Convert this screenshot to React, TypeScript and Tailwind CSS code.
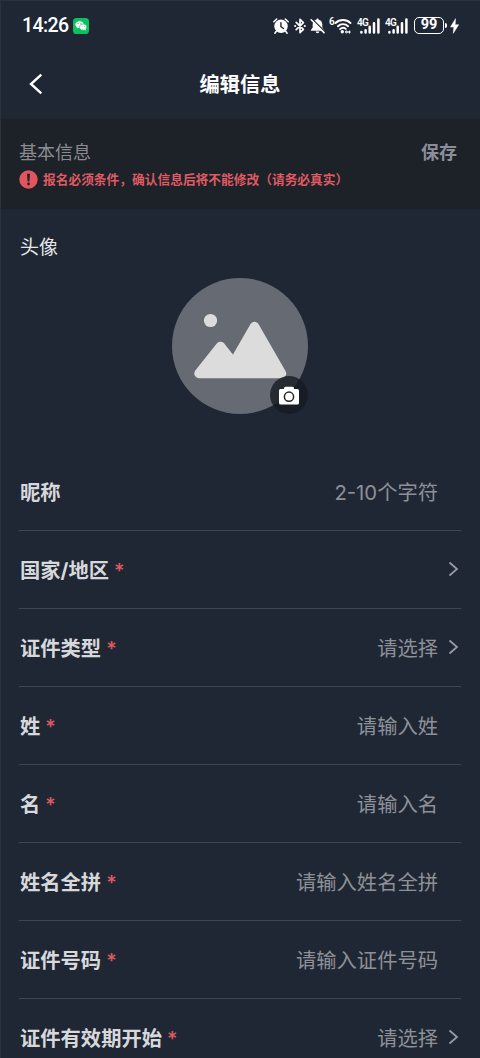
import React from 'react';

type Field = {
  label: string;
  required?: boolean;
  placeholder?: string;
  arrow?: boolean;
};

const fields: Field[] = [
  { label: '昵称', placeholder: '2-10个字符' },
  { label: '国家/地区', required: true, arrow: true },
  { label: '证件类型', required: true, placeholder: '请选择', arrow: true },
  { label: '姓', required: true, placeholder: '请输入姓' },
  { label: '名', required: true, placeholder: '请输入名' },
  { label: '姓名全拼', required: true, placeholder: '请输入姓名全拼' },
  { label: '证件号码', required: true, placeholder: '请输入证件号码' },
  { label: '证件有效期开始', required: true, placeholder: '请选择', arrow: true },
];

const WechatIcon: React.FC = () => (
  <svg width="16" height="16" viewBox="0 0 16 16" className="ml-[5px] shrink-0">
    <rect width="16" height="16" rx="3.6" fill="#0cc160" />
    <path d="M6.6 3.2C4.2 3.2 2.4 4.7 2.4 6.6c0 1.1.6 2 1.5 2.6l-.4 1.2 1.5-.7c.5.2 1 .2 1.6.2 2.4 0 4.2-1.4 4.2-3.3S9 3.2 6.6 3.2z" fill="#fff" />
    <ellipse cx="10.1" cy="9.1" rx="3.7" ry="3.1" fill="#fff" stroke="#0cc160" strokeWidth=".6" />
    <path d="M11.3 11.5l1.5 1.2-.2-1.9z" fill="#fff" />
    <g fill="#0cc160">
      <circle cx="5.2" cy="5.6" r=".55" />
      <circle cx="8" cy="5.6" r=".55" />
      <circle cx="9" cy="8.5" r=".45" />
      <circle cx="11.3" cy="8.5" r=".45" />
    </g>
  </svg>
);

const AlarmIcon: React.FC = () => (
  <svg width="16" height="16" viewBox="0 0 16 16" className="shrink-0">
    <circle cx="8" cy="8.3" r="6.7" fill="#fff" />
    <path d="M.8 3.8 3.7 1M15.2 3.8 12.3 1M3.3 13.2l-1.4 2M12.7 13.2l1.4 2" stroke="#fff" strokeWidth="1.5" strokeLinecap="round" />
    <path d="M7.9 4.7v4l2.6 1.8" fill="none" stroke="#202734" strokeWidth="1.4" strokeLinecap="round" />
  </svg>
);

const BluetoothIcon: React.FC = () => (
  <svg width="12" height="16" viewBox="0 0 12 16" className="ml-[5px] shrink-0">
    <path d="M2.2 4.3l7.2 7L6 14.6V1.4l3.4 3.3-7.2 7" fill="none" stroke="#fff" strokeWidth="1.7" strokeLinejoin="round" strokeLinecap="round" />
    <circle cx="1.2" cy="8" r="1.1" fill="#fff" />
    <circle cx="10.8" cy="8" r="1.1" fill="#fff" />
  </svg>
);

const MutedBellIcon: React.FC = () => (
  <svg width="15" height="16" viewBox="0 0 15 16" className="ml-1 shrink-0">
    <path d="M7.5.6a1.2 1.2 0 0 1 1.2 1.2c2.1.5 3.6 2.3 3.6 4.5v3.2l1.8 2.4v.8H.9v-.8l1.8-2.4V6.3c0-2.2 1.500-4 3.600-4.500A1.200 1.200 0 0 1 7.500.6z" fill="#fff" />
    <path d="M5.7 13.5h3.6a1.8 1.8 0 0 1-3.6 0z" fill="#fff" />
    <path d="M2.3 1.3 15 13.7" stroke="#202734" strokeWidth="1.3" />
    <path d="M1.2 1.8 14 14.6" stroke="#fff" strokeWidth="1.6" strokeLinecap="round" />
  </svg>
);

const WifiIcon: React.FC = () => (
  <svg width="18" height="16" viewBox="0 0 18 16" className="shrink-0">
    <g fill="none" stroke="#fff" strokeWidth="1.9" strokeLinecap="round">
      <path d="M1.5 5a10.8 10.8 0 0 1 15 0" />
      <path d="M3.9 8.2a7.4 7.4 0 0 1 10.2 0" />
      <path d="M6.2 11a4.2 4.2 0 0 1 5.6-.1" />
    </g>
    <circle cx="8.3" cy="13.8" r="1.7" fill="#fff" />
    <path d="M10.800 14l1.800-2.200v4.200zM16.800 14l-1.800 2.200v-4.200zM12.800 13.200h2v1.500h-2z" fill="#fff" />
  </svg>
);

const SignalIcon: React.FC = () => (
  <div className="relative ml-[5px] h-4 w-[23px] shrink-0">
    <span className="absolute -top-px left-0 text-[10px] leading-[11px] font-semibold tracking-[-0.6px]">4G</span>
    <svg width="23" height="16" viewBox="0 0 23 16">
      <g stroke="#fff" strokeWidth="2.5" strokeLinecap="round">
        <path d="M4.4 14v.6M8.6 12.3v2.3M12.7 8.800v5.800M17 5.200v9.400M21.400 1.600v13" />
      </g>
    </svg>
  </div>
);

const StatusBar: React.FC = () => (
  <div className="flex h-[49px] shrink-0 items-center pr-[21px] pl-[21px] text-white">
    <span className="font-[Roboto,sans-serif] text-[19.5px] leading-none font-medium tracking-[-0.6px]">14:26</span>
    <WechatIcon />
    <div className="ml-auto flex items-center font-[Roboto,sans-serif]">
      <AlarmIcon />
      <BluetoothIcon />
      <MutedBellIcon />
      <span className="-mt-[7px] ml-1 w-[5px] text-[10px] leading-none font-semibold">6</span>
      <WifiIcon />
      <SignalIcon />
      <SignalIcon />
      <div className="ml-[6px] flex h-[17px] w-[30px] items-center justify-center rounded-[5px] border border-white text-[14.5px] leading-none font-bold">
        99
      </div>
      <div className="ml-px h-[5px] w-[2px] rounded-r bg-white" />
      <svg width="9" height="16" viewBox="0 0 9 16" className="ml-[3px]">
        <path d="M5.5.7.5 9h3.3l-.5 6.3 5.4-8.6H5.2z" fill="#fff" stroke="#fff" strokeWidth=".5" />
      </svg>
    </div>
  </div>
);

const Avatar: React.FC = () => (
  <div className="relative mx-auto mt-[18px] h-[136px] w-[136px] rounded-full bg-[#666a73]">
    <svg width="136" height="136" viewBox="0 0 136 136">
      <circle cx="38.5" cy="42.5" r="6.6" fill="#dcdcdc" />
      <path d="M27 95.500 48.500 68.500 61.500 85 82.500 48.500 109.500 95.500z" fill="#dcdcdc" stroke="#dcdcdc" strokeWidth="9.500" strokeLinejoin="round" />
    </svg>
    <div className="absolute top-[98px] left-[98px] flex h-[38px] w-[38px] items-center justify-center rounded-full bg-[#171b22]/80">
      <svg width="22" height="19" viewBox="0 0 22 19">
        <path d="M2.500 3H6V2.300A1.500 1.500 0 0 1 7.500.8h7A1.500 1.500 0 0 1 16 2.300V3h3.500A1.500 1.500 0 0 1 21 4.500V17a1.500 1.500 0 0 1-1.500 1.500h-17A1.500 1.500 0 0 1 1 17V4.500A1.500 1.500 0 0 1 2.500 3z" fill="#fff" />
        <circle cx="11" cy="10.7" r="4.6" fill="none" stroke="#20242b" strokeWidth="1.5" />
      </svg>
    </div>
  </div>
);

const FieldRow: React.FC<{ field: Field }> = ({ field }) => (
  <div className="flex h-[78px] shrink-0 items-center border-b border-[#3e4450] text-[20.3px]">
    <span className="pt-[3px] pl-px font-bold text-[#d6d8db]">{field.label}</span>
    {field.required && <span className="ml-[5px] pt-[3px] text-[20px] font-medium text-[#df5a62]">*</span>}
    <span className="ml-auto pt-[3px] text-[#8d9197]">{field.placeholder}</span>
    <div className="flex w-[23px] justify-end pr-[2px] pb-px">
      {field.arrow && (
        <svg width="11" height="16" viewBox="0 0 11 16">
          <path d="M1.5 1.5 9 8l-7.500 6.500" fill="none" stroke="#9a9da4" strokeWidth="1.700" />
        </svg>
      )}
    </div>
  </div>
);

const App: React.FC = () => {
  return (
    <div className="flex h-[1058px] w-[480px] flex-col overflow-hidden border-t border-l border-[#2b323f] bg-[#202734] font-['Inter','Noto_Sans_CJK_SC',sans-serif]">
      <StatusBar />
      <header className="grid h-[69px] shrink-0 grid-cols-3 items-center pr-[29px] pb-[2px] pl-[28px] text-white">
        <svg width="14" height="22" viewBox="0 0 14 22">
          <path d="M12.3 1.7 2 11l10.3 9.3" fill="none" stroke="#fff" strokeWidth="2.4" />
        </svg>
        <h1 className="pt-[3px] text-center text-[20.2px] font-bold">编辑信息</h1>
      </header>

      <section className="h-[90px] shrink-0 bg-[#1d2128] pt-5 pr-[23px] pl-[18px]">
        <div className="flex h-[26px] items-center justify-between text-[18px]">
          <span className="text-[#8b8c8f]">基本信息</span>
          <span className="font-bold text-[#8b8e98]">保存</span>
        </div>
        <div className="mt-[5px] flex h-[19px] items-center text-[12.72px] whitespace-nowrap text-[#df5a62]">
          <svg width="19" height="19" viewBox="0 0 19 19" className="mr-[5px] shrink-0">
            <circle cx="9.5" cy="9.5" r="9.2" fill="#e2555f" />
            <path d="M8 3.8h3l-.6 7.600H8.600z" fill="#1d2128" />
            <circle cx="9.5" cy="14" r="1.4" fill="#1d2128" />
          </svg>
          <span className="font-bold">报名必须条件，确认信息后将不能修改（请务必真实）</span>
        </div>
      </section>

      <section className="h-[244px] shrink-0 pt-[25px] pr-[20px] pl-[18px]">
        <div className="h-[26px] pl-px text-[19px] leading-[27px] text-[#e6e7e9]">头像</div>
        <Avatar />
      </section>

      <main className="shrink-0 pr-[19px] pl-[18px]">
        {fields.map((field) => (
          <FieldRow key={field.label} field={field} />
        ))}
      </main>
    </div>
  );
};

export default App;
